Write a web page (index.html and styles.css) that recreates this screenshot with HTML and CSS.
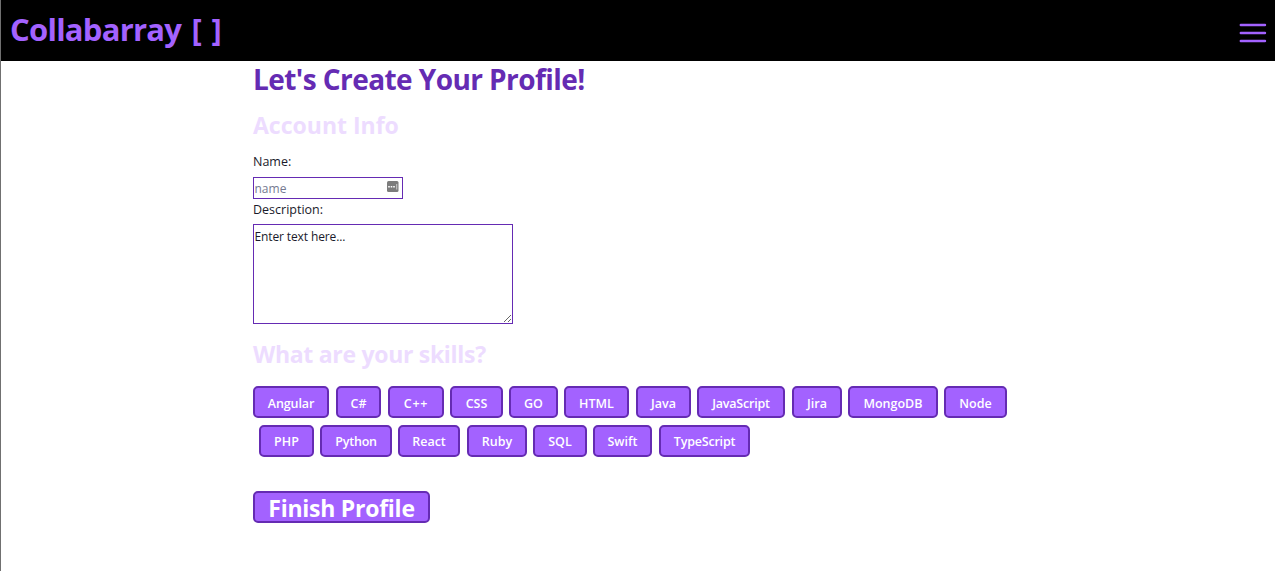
FILE: index.html
```html
<!DOCTYPE html>
<html lang="en">
<head>
<meta charset="utf-8">
<title>Collabarray</title>
<link rel="stylesheet" href="styles.css">
</head>
<body>
<header class="navbar">
  <div class="brand">Collabarray <span class="brackets">[ ]</span></div>
  <svg class="menu-icon" width="28" height="22" viewBox="0 0 28 22" fill="none" stroke="#a362ff" stroke-width="2.4" stroke-linecap="round"><path d="M1.8 3H26M1.8 11H26M1.8 19H26"/></svg>
</header>
<main class="profile">
  <h1 class="title">Let's Create Your Profile!</h1>
  <h2 class="section-title account">Account Info</h2>
  <label class="label" for="name">Name:</label>
  <div class="name-field">
    <input class="name-input" id="name" type="text" placeholder="name">
    <svg class="autofill" width="12" height="12" viewBox="0 0 12 12"><rect width="11.5" height="11" rx="1.5" fill="#7c7c7c"/><path d="M1.2 5h1.6v1.4H1.2zM3.7 5h1.6v1.4H3.7zM6.2 5h1.6v1.4H6.2z" fill="#fff"/><path d="M9 3h1.3v5.5H9z" fill="#bbb"/></svg>
  </div>
  <label class="label" for="description">Description:</label>
  <textarea class="description" id="description">Enter text here...</textarea>
  <h2 class="section-title skills-title">What are your skills?</h2>
  <div class="skills">
    <button class="skill angular">Angular</button>
    <button class="skill csharp">C#</button>
    <button class="skill cpp">C++</button>
    <button class="skill css">CSS</button>
    <button class="skill go">GO</button>
    <button class="skill html">HTML</button>
    <button class="skill java">Java</button>
    <button class="skill javascript">JavaScript</button>
    <button class="skill jira">Jira</button>
    <button class="skill mongodb">MongoDB</button>
    <button class="skill node">Node</button>
  </div>
  <div class="skills skills-next">
    <button class="skill php">PHP</button>
    <button class="skill python">Python</button>
    <button class="skill react">React</button>
    <button class="skill ruby">Ruby</button>
    <button class="skill sql">SQL</button>
    <button class="skill swift">Swift</button>
    <button class="skill typescript">TypeScript</button>
  </div>
  <button class="finish">Finish Profile</button>
</main>
</body>
</html>
```

FILE: styles.css
```css
* { box-sizing: border-box; }
body {
  margin: 0;
  min-height: 571px;
  border-left: 1px solid #707070;
  background: #fff;
  color: #1a1a2b;
  font-family: "Open Sans", "Noto Sans", sans-serif;
  font-size: 13px;
}
.navbar {
  display: flex;
  justify-content: space-between;
  height: 61px;
  padding: 0 8px 0 9px;
  background: #000;
}
.brand {
  color: #a362ff;
  font-size: 31px;
  font-weight: 700;
  line-height: 59px;
  letter-spacing: -0.75px;
  white-space: pre;
}
.brackets { margin-left: 3px; letter-spacing: 0.8px; }
.menu-icon { margin-top: 22px; }
.profile {
  display: flex;
  flex-direction: column;
  align-items: flex-start;
  padding-left: 252px;
}
.title {
  margin: 0;
  color: #652bb3;
  font-size: 28px;
  font-weight: 700;
  line-height: 37px;
  letter-spacing: -0.57px;
  white-space: nowrap;
}
.section-title {
  margin: 0;
  color: #eddcff;
  font-size: 23px;
  font-weight: 700;
  line-height: 32px;
  white-space: nowrap;
}
.account { margin-top: 11px; }
.label {
  height: 24px;
  font-size: 12.5px;
  font-weight: 500;
  line-height: 20px;
}
.account + .label { margin-top: 11px; height: 25px; }
.name-field { position: relative; height: 23px; }
.name-input {
  display: block;
  width: 150px;
  height: 22px;
  padding: 0 1px 0 0.5px;
  border: 1px solid #652bb3;
  font: 12px/20px "Open Sans", sans-serif;
}
.name-input::placeholder { color: #757b91; }
.autofill { position: absolute; left: 134px; top: 4px; }
.description {
  display: block;
  width: 260px;
  height: 100px;
  padding: 2px 1px 2px 0.5px;
  border: 1px solid #652bb3;
  color: #1a1a2b;
  font: 12px/20px "Open Sans", sans-serif;
  letter-spacing: -0.12px;
}
.skills-title { margin-top: 14px; letter-spacing: -0.3px; }
.skills {
  display: flex;
  gap: 6px;
  margin-top: 16px;
}
.skills-next { margin-top: 7px; padding-left: 6px; }
.skill, .finish {
  flex: none;
  height: 32px;
  padding: 0;
  border: 2px solid #652bb3;
  border-radius: 5px;
  background: #a362ff;
  color: #fff;
  font-family: "Open Sans", sans-serif;
  font-size: 12.5px;
  font-weight: 600;
  line-height: 28px;
  white-space: nowrap;
}
.skill { padding-top: 3px; line-height: 25px; }
.skills-next .skill { padding-top: 1px; line-height: 27px; }
.angular, .csharp, .html, .javascript, .react, .swift { margin-right: 1px; }
.angular { width: 76px; letter-spacing: -0.1px; }
.csharp { width: 45px; }
.cpp { width: 56px; letter-spacing: 0.8px; }
.css { width: 53px; }
.go { width: 49px; }
.html { width: 65px; }
.java { width: 55px; }
.javascript { width: 88px; letter-spacing: -0.2px; }
.jira { width: 50px; }
.mongodb { width: 90px; }
.node { width: 63px; }
.php { width: 55px; }
.python { width: 72px; letter-spacing: -0.2px; }
.react { width: 62px; }
.ruby { width: 60px; }
.sql { width: 54px; }
.swift { width: 59px; }
.typescript { width: 91px; letter-spacing: -0.2px; }
.finish {
  width: 177px;
  margin-top: 34px;
  padding-top: 2px;
  font-size: 23px;
  font-weight: 700;
  line-height: 26px;
  letter-spacing: -0.25px;
}
```
